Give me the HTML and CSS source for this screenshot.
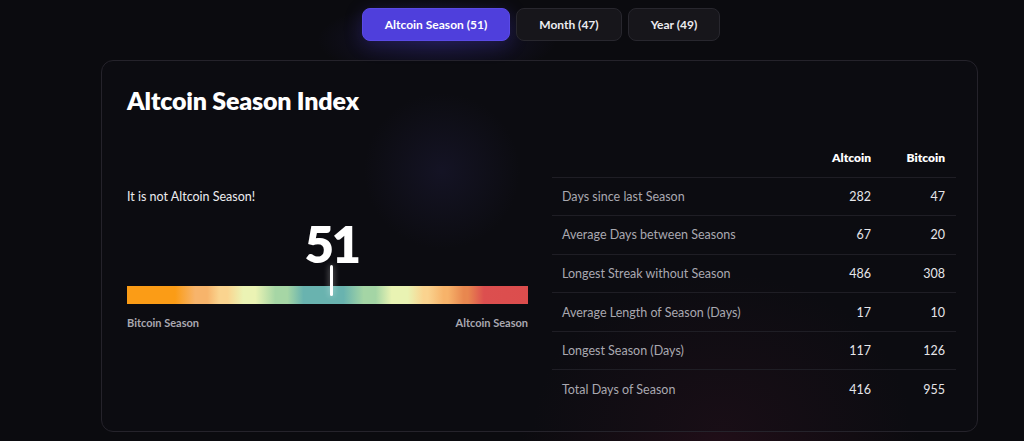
FILE: index.html
```html
<!DOCTYPE html>
<html lang="en">
<head>
<meta charset="utf-8">
<title>Altcoin Season Index</title>
<link rel="stylesheet" href="styles.css">
</head>
<body>
<div class="page">
  <nav class="tabs">
    <button class="tab tab-active">Altcoin Season (51)</button>
    <button class="tab">Month (47)</button>
    <button class="tab">Year (49)</button>
  </nav>
  <section class="card">
    <h1 class="title">Altcoin Season Index</h1>
    <div class="cols">
      <div class="gauge">
        <p class="status">It is not Altcoin Season!</p>
        <div class="meter">
          <div class="value" style="left: 51%">51</div>
          <div class="marker" style="left: 51%"></div>
          <div class="bar"></div>
        </div>
        <div class="legend">
          <span>Bitcoin Season</span>
          <span>Altcoin Season</span>
        </div>
      </div>
      <table class="stats">
        <thead>
          <tr><th></th><th class="num">Altcoin</th><th class="num">Bitcoin</th></tr>
        </thead>
        <tbody>
          <tr><td>Days since last Season</td><td class="num">282</td><td class="num">47</td></tr>
          <tr><td>Average Days between Seasons</td><td class="num">67</td><td class="num">20</td></tr>
          <tr><td>Longest Streak without Season</td><td class="num">486</td><td class="num">308</td></tr>
          <tr><td>Average Length of Season (Days)</td><td class="num">17</td><td class="num">10</td></tr>
          <tr><td>Longest Season (Days)</td><td class="num">117</td><td class="num">126</td></tr>
          <tr><td>Total Days of Season</td><td class="num">416</td><td class="num">955</td></tr>
        </tbody>
      </table>
    </div>
  </section>
</div>
</body>
</html>
```
FILE: styles.css
```css
* { box-sizing: border-box; }
html, body { margin: 0; padding: 0; }
body {
  background:
    radial-gradient(ellipse 120px 40px at 437px 40px, rgba(80,64,220,0.18), transparent 100%),
    radial-gradient(ellipse 200px 120px at 720px 441px, rgba(70,20,40,0.35), transparent 100%),
    #0b0b0f;
  height: 441px;
  overflow: hidden;
  font-family: Lato, "Open Sans", sans-serif;
  color: #ffffff;
}
.page {
  width: 877px;
  margin-left: 101px;
  padding-top: 8px;
}
.tabs {
  display: flex;
  justify-content: center;
  gap: 6px;
  padding-left: 3px;
}
.tab {
  height: 33px;
  padding: 0 22px;
  border-radius: 8px;
  border: 1px solid #28272e;
  background: #17161b;
  color: #ececf0;
  font-family: inherit;
  font-size: 12px;
  font-weight: 700;
}
.tab-active {
  background: #4f3fdc;
  border-color: #5a4ae6;
  color: #ffffff;
  box-shadow: 0 4px 18px rgba(79,63,220,0.25);
}
.card {
  margin-top: 19px;
  height: 372px;
  border: 1px solid #25232b;
  border-radius: 12px;
  padding: 24px 22px 0 25px;
  background:
    radial-gradient(circle 78px at 340px 110px, rgba(30,28,60,0.45), transparent 100%),
    radial-gradient(ellipse 190px 160px at 620px 372px, rgba(40,16,28,0.45), transparent 100%),
    #0c0c11;
}
.title {
  margin: 0;
  font-size: 25px;
  line-height: 30px;
  font-weight: 800;
  letter-spacing: -0.2px;
}
.cols {
  display: grid;
  grid-template-columns: 401px 404px;
  gap: 24px;
  margin-top: 23px;
  align-items: start;
}
.gauge {
  padding-top: 51px;
}
.status {
  margin: 0;
  font-size: 12.5px;
  line-height: 16px;
  color: #ededf0;
}
.meter {
  position: relative;
  margin-top: 81px;
  height: 18px;
}
.value {
  position: absolute;
  bottom: 38px;
  transform: translateX(-50%);
  font-size: 51px;
  line-height: 44px;
  font-weight: 800;
  letter-spacing: -2.5px;
  color: #ffffff;
}
.marker {
  position: absolute;
  bottom: 8px;
  width: 3px;
  height: 31px;
  margin-left: -1.5px;
  border-radius: 2px;
  background: #ffffff;
  box-shadow: 0 0 6px rgba(255,255,255,0.5);
  z-index: 2;
}
.bar {
  height: 18px;
  background: linear-gradient(to right,
    #fb9c16 0%, #fb9c16 12%,
    #f7b46b 17%, #f7b46b 20%,
    #fad48f 23%, #fad48f 25%,
    #ebf3b4 29%, #ebf3b4 32%,
    #a6d6a5 37%, #a6d6a5 40%,
    #69b3af 44%, #69b3af 54%,
    #a4d5a5 59%, #a4d5a5 62%,
    #e9f3b3 66%, #e9f3b3 70%,
    #fad38f 74%, #fad38f 75%,
    #f7b36a 79%, #f7b36a 80%,
    #e8874f 84%, #e8874f 85%,
    #dc4f4f 89%, #dc4d4d 100%);
}
.legend {
  display: flex;
  justify-content: space-between;
  margin-top: 12px;
  font-size: 11px;
  font-weight: 700;
  color: #a9a8b0;
}
.stats {
  width: 100%;
  border-collapse: collapse;
  font-size: 12.5px;
}
.stats th {
  height: 39px;
  font-size: 12px;
  font-weight: 800;
  color: #ffffff;
  text-align: right;
  border-bottom: 1px solid #1f1e25;
}
.stats td {
  height: 38.6px;
  color: #a9a8b0;
  padding-left: 10px;
  border-bottom: 1px solid #1f1e25;
}
.stats tbody tr:last-child td { border-bottom: none; }
.stats td.num, .stats th.num {
  text-align: right;
  color: #e6e6ea;
  padding-left: 0;
}
.stats th.num:last-child, .stats td.num:last-child {
  width: 84px;
  padding-right: 11px;
}
.stats th.num:nth-child(2), .stats td.num:nth-child(2) {
  width: 60px;
}
.stats th.num { color: #ffffff; }
```
